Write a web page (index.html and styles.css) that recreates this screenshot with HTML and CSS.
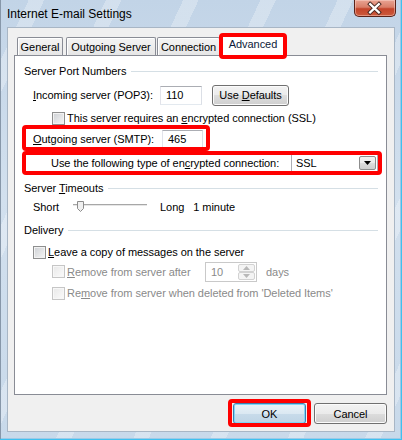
FILE: index.html
```html
<!DOCTYPE html>
<html>
<head>
<meta charset="utf-8">
<link rel="stylesheet" href="styles.css">
</head>
<body>
<div class="window">
  <div class="titlebar">
    <span class="title">Internet E-mail Settings</span>
    <div class="close">
      <svg width="42" height="17" viewBox="0 0 42 17">
        <path d="M16.5 4 L25.5 12.5 M25.5 4 L16.5 12.5" stroke="#4a2a24" stroke-width="4.2" stroke-linecap="square"/>
        <path d="M16.5 4 L25.5 12.5 M25.5 4 L16.5 12.5" stroke="#ffffff" stroke-width="2.2" stroke-linecap="square"/>
      </svg>
    </div>
  </div>
  <div class="client">
    <div class="tabs">
      <div class="tab t-general">General</div>
      <div class="tab t-out">Outgoing Server</div>
      <div class="tab t-conn">Connection</div>
      <div class="tab tab-active t-adv annot">Advanced</div>
    </div>
    <div class="panel">
      <div class="group g1"><span>Server Port Numbers</span><i class="rule"></i></div>

      <div class="row r-in">
        <span class="lbl-in"><u>I</u>ncoming server (POP3):</span>
        <span class="textbox tb-in">110</span>
        <span class="btn btn-def"><span>Use <u>D</u>efaults</span></span>
      </div>

      <div class="row r-ssl">
        <span class="check"></span>
        <span class="ctext">This server requires an <u>e</u>ncrypted connection (SSL)</span>
      </div>

      <div class="row r-out">
        <div class="out-wrap annot">
          <span class="lbl-out"><u>O</u>utgoing server (SMTP):</span>
          <span class="textbox tb-out">465</span>
        </div>
      </div>

      <div class="row r-enc">
        <div class="enc-wrap annot">
          <span>Use the following type of en<u>c</u>rypted connection:</span>
          <div class="combo">
            <span class="combo-val">SSL</span>
            <span class="combo-btn"><svg width="7" height="4" viewBox="0 0 7 4"><path d="M0 0 H7 L3.5 4 Z" fill="#000"/></svg></span>
          </div>
        </div>
      </div>

      <div class="group g2"><span>Server <u>T</u>imeouts</span><i class="rule"></i></div>

      <div class="row r-slider">
        <span class="lbl-short">Short</span>
        <svg class="slider" width="74" height="16" viewBox="0 0 74 16">
          <rect x="0" y="5" width="74" height="1" fill="#a7a7a7"/>
          <rect x="0" y="6" width="74" height="1" fill="#e6e6e6"/>
          <path d="M4.5 2.5 H10.5 V9.5 L7.5 12.5 L4.5 9.5 Z" fill="#f0f0f0" stroke="#8c8c8c"/>
        </svg>
        <span class="lbl-long">Long</span>
        <span class="lbl-min">1 minute</span>
      </div>

      <div class="group g3"><span>Delivery</span><i class="rule"></i></div>

      <div class="row r-leave">
        <span class="check"></span>
        <span class="ctext"><u>L</u>eave a copy of messages on the server</span>
      </div>

      <div class="row r-remove disabled">
        <span class="check check-dis"></span>
        <span class="ctext lbl-remove"><u>R</u>emove from server after</span>
        <div class="spin">
          <span class="spin-val">10</span>
          <div class="spin-btns">
            <span class="spin-b"><svg width="7" height="4" viewBox="0 0 7 4"><path d="M0 4 H7 L3.5 0 Z" fill="#b8b8b8"/></svg></span>
            <span class="spin-b"><svg width="7" height="4" viewBox="0 0 7 4"><path d="M0 0 H7 L3.5 4 Z" fill="#b8b8b8"/></svg></span>
          </div>
        </div>
        <span class="days">days</span>
      </div>

      <div class="row r-deleted disabled">
        <span class="check check-dis"></span>
        <span class="ctext">Re<u>m</u>ove from server when deleted from 'Deleted Items'</span>
      </div>
    </div>
    <div class="footer">
      <span class="btn dbtn btn-ok annot-ok"><span>OK</span></span>
      <span class="btn dbtn"><span>Cancel</span></span>
    </div>
  </div>
</div>
</body>
</html>
```
FILE: styles.css
```css
* { box-sizing: border-box; }
html, body { margin: 0; padding: 0; }
body {
  width: 402px;
  height: 440px;
  overflow: hidden;
  font-family: "Liberation Sans", Arial, sans-serif;
  font-size: 11px;
  letter-spacing: -0.05px;
  color: #000;
}
u { text-decoration: underline; text-underline-offset: 1px; }

.window {
  width: 402px;
  height: 440px;
  display: flex;
  flex-direction: column;
  background:
    repeating-linear-gradient(115deg, rgba(255,255,255,0) 0 26px, rgba(255,255,255,0.28) 26px 40px, rgba(255,255,255,0) 40px 70px),
    linear-gradient(180deg, #c2d4e7 0%, #d2e0ee 45%, #c8d9ea 100%);
  box-shadow: inset -1px -1px 0 #3fc1f0, inset 1px 0 0 #8797a9, inset -2px -2px 0 #9ec9e6;
}

.titlebar {
  height: 27px;
  flex: none;
  display: flex;
  align-items: flex-start;
  padding-left: 7px;
}
.title {
  font-size: 12px;
  letter-spacing: 0;
  line-height: 14px;
  margin-top: 7px;
}
.close {
  margin-left: auto;
  margin-right: 6px;
  width: 42px;
  height: 17px;
  border: 1px solid #5a2219;
  border-top: none;
  border-radius: 0 0 5px 5px;
  background: linear-gradient(180deg, #e9a493 0%, #d97e68 45%, #c4442a 55%, #cc5a3c 100%);
  box-shadow: inset 0 0 0 1px rgba(255,220,210,0.45);
  display: flex;
  align-items: center;
  justify-content: center;
}
.close svg { display: block; margin-left: -1px; }

.client {
  flex: 1;
  margin: 0 7px 8px;
  background: #f0f0f0;
  border: 1px solid #a8b6c5;
  padding: 6px 7px 0 6px;
  display: flex;
  flex-direction: column;
}

/* Tabs */
.tabs {
  display: flex;
  align-items: flex-end;
  height: 21px;
  padding-left: 3px;
  flex: none;
}
.tab {
  height: 18px;
  border: 1px solid #898c95;
  border-bottom: none;
  border-radius: 2px 2px 0 0;
  background: linear-gradient(180deg, #f4f4f4 0%, #e6e6e6 100%);
  box-shadow: inset 1px 1px 0 #ffffff;
  line-height: 16px;
  padding-top: 1px;
  text-align: center;
  white-space: nowrap;
}
.t-general { width: 46px; margin-right: 3px; }
.t-out { width: 90px; margin-right: 1px; }
.t-conn { width: 63px; }
.t-adv { width: 66px; }
.tab-active {
  height: 22px;
  margin-bottom: -1px;
  background: #fff;
  box-shadow: none;
  position: relative;
  color: #0d1a3a;
}

/* annotation frames */
.annot { position: relative; }
.annot::after {
  content: "";
  position: absolute;
  border: 4px solid #ff0000;
  border-radius: 4px;
  pointer-events: none;
}
.t-adv::after { left: -2px; right: -2px; top: -2px; bottom: -3px; }
.out-wrap::after { left: -11px; right: -7px; top: -4px; bottom: -3px; }
.enc-wrap::after { left: -4px; right: -4px; top: -3px; bottom: -3px; }
.annot-ok { position: relative; }
.annot-ok::after {
  content: "";
  position: absolute;
  left: -6px; right: -6px; top: -5px; bottom: -4px;
  border: 4px solid #ff0000;
  border-radius: 4px;
}

/* Panel */
.panel {
  height: 340px;
  flex: none;
  background: #fff;
  border: 1px solid #898c95;
  padding: 0 8px 0 9px;
  display: flex;
  flex-direction: column;
}
.group {
  display: flex;
  align-items: center;
  height: 16px;
  flex: none;
  white-space: nowrap;
}
.group .rule {
  flex: 1;
  height: 1px;
  background: #d5dfe5;
  margin-left: 5px;
}
.g1 { margin-top: 7px; }
.g2 { margin-top: 8px; }
.g3 { margin-top: 7px; }

.row {
  display: flex;
  align-items: center;
  flex: none;
  white-space: nowrap;
}
.r-in { height: 22px; margin-top: 5px; padding-left: 9px; }
.r-ssl { height: 14px; margin-top: 5px; padding-left: 28px; }
.r-out { height: 19px; margin-top: 4px; padding-left: 9px; }
.r-enc { height: 18px; margin-top: 6px; padding-left: 2px; }
.r-slider { height: 16px; margin-top: 3px; padding-left: 9px; }
.r-leave { height: 14px; margin-top: 7px; padding-left: 9px; }
.r-remove { height: 21px; margin-top: 2px; padding-left: 28px; }
.r-deleted { height: 14px; margin-top: 4px; padding-left: 28px; }

.lbl-in { width: 127px; }
.lbl-out { width: 129px; }

.textbox {
  display: flex;
  align-items: center;
  background: #fff;
  border: 1px solid;
  border-color: #abadb3 #dbdfe6 #e3e9ef #e2e3ea;
  padding-left: 5px;
}
.tb-in { width: 42px; height: 19px; }
.tb-out { width: 41px; height: 18px; }

.btn {
  display: flex;
  align-items: center;
  justify-content: center;
  border: 1px solid #707070;
  border-radius: 3px;
  background: linear-gradient(180deg, #f2f2f2 0%, #ebebeb 50%, #dddddd 50%, #cfcfcf 100%);
  box-shadow: inset 0 0 0 1px #fbfbfb;
}
.btn-def { width: 77px; height: 21px; margin-left: 10px; }

.out-wrap { display: flex; align-items: center; height: 19px; }

.enc-wrap {
  display: flex;
  align-items: center;
  width: 352px;
  height: 18px;
  padding-left: 25px;
}
.combo {
  margin-left: auto;
  width: 87px;
  height: 18px;
  border: 1px solid #abadb3;
  background: #fff;
  display: flex;
  align-items: center;
  padding: 0 1px 0 4px;
}
.combo-val { flex: 1; }
.combo-btn {
  width: 17px;
  height: 14px;
  border: 1px solid #8d8d8d;
  border-radius: 2px;
  background: linear-gradient(180deg, #f2f2f2 0%, #ebebeb 50%, #dddddd 50%, #cfcfcf 100%);
  display: flex;
  align-items: center;
  justify-content: center;
}
.combo-btn svg, .spin-b svg { display: block; }

.check {
  width: 13px;
  height: 13px;
  flex: none;
  border: 1px solid #8e8f8f;
  background: linear-gradient(135deg, #cdd0d4 0%, #f6f6f6 100%);
  box-shadow: inset 0 0 0 1px #f2f2f2;
}
.check-dis {
  border-color: #c6c6c6;
  background: linear-gradient(135deg, #e8e8e8 0%, #fbfbfb 100%);
  box-shadow: inset 0 0 0 1px #f7f7f7;
}
.ctext { margin-left: 2px; }
.disabled { color: #8a8a8a; }

.lbl-short { width: 40px; }
.slider { display: block; flex: none; }
.lbl-long { margin-left: 13px; }
.lbl-min { margin-left: 9px; }

.lbl-remove { width: 138px; }
.spin {
  width: 52px;
  height: 20px;
  border: 1px solid #c9c9c9;
  background: #fff;
  display: flex;
  align-items: center;
  padding: 0 1px 0 5px;
}
.spin-val { flex: 1; }
.spin-btns {
  width: 17px;
  height: 16px;
  display: flex;
  flex-direction: column;
}
.spin-b {
  flex: 1;
  border: 1px solid #d2d2d2;
  border-radius: 2px;
  background: #f4f4f4;
  display: flex;
  align-items: center;
  justify-content: center;
}
.days { margin-left: 9px; }

.footer {
  display: flex;
  justify-content: flex-end;
  gap: 8px;
  margin-top: 8px;
  flex: none;
}
.dbtn { width: 73px; height: 21px; }
.btn-ok {
  border-color: #3c7fb1;
  background: linear-gradient(180deg, #eaf2f8 0%, #dbe8f2 50%, #c8dbea 50%, #bed4e5 100%);
  box-shadow: inset 0 0 0 1px #7fd6f7;
}
```
